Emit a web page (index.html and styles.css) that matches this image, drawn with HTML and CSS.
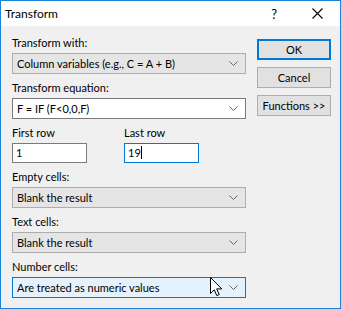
FILE: index.html
```html
<!DOCTYPE html>
<html lang="en">
<head>
  <meta charset="UTF-8">
  <title>Transform</title>
  <link rel="stylesheet" href="styles.css">
</head>
<body>
  <div class="window">
    <div class="titlebar">
      <span class="title">Transform</span>
      <span class="help">?</span>
      <svg class="close" width="11" height="11" viewBox="0 0 11 11">
        <path d="M0.5 0.5 L10.5 10.5 M10.5 0.5 L0.5 10.5" stroke="#000" stroke-width="1.1" fill="none"/>
      </svg>
    </div>

    <div class="content">
      <div class="form">
        <div class="group">
          <div class="label">Transform with:</div>
          <div class="combo">
            <span>Column variables (e.g., C = A + B)</span>
            <svg class="chev" width="9" height="5" viewBox="0 0 9 5"><path d="M0.5 0.5 L4.5 4.5 L8.5 0.5" stroke="#666" fill="none"/></svg>
          </div>
        </div>

        <div class="group">
          <div class="label">Transform equation:</div>
          <div class="combo edit">
            <span>F = IF (F&lt;0,0,F)</span>
            <svg class="chev" width="9" height="5" viewBox="0 0 9 5"><path d="M0.5 0.5 L4.5 4.5 L8.5 0.5" stroke="#666" fill="none"/></svg>
          </div>
        </div>

        <div class="group rows">
          <div class="rowfield">
            <div class="label">First row</div>
            <div class="textbox">1</div>
          </div>
          <div class="rowfield">
            <div class="label">Last row</div>
            <div class="textbox focused">19<span class="caret"></span></div>
          </div>
        </div>

        <div class="group">
          <div class="label">Empty cells:</div>
          <div class="combo">
            <span>Blank the result</span>
            <svg class="chev" width="9" height="5" viewBox="0 0 9 5"><path d="M0.5 0.5 L4.5 4.5 L8.5 0.5" stroke="#666" fill="none"/></svg>
          </div>
        </div>

        <div class="group">
          <div class="label">Text cells:</div>
          <div class="combo">
            <span>Blank the result</span>
            <svg class="chev" width="9" height="5" viewBox="0 0 9 5"><path d="M0.5 0.5 L4.5 4.5 L8.5 0.5" stroke="#666" fill="none"/></svg>
          </div>
        </div>

        <div class="group">
          <div class="label">Number cells:</div>
          <div class="combo hover">
            <span>Are treated as numeric values</span>
            <svg class="chev" width="9" height="5" viewBox="0 0 9 5"><path d="M0.5 0.5 L4.5 4.5 L8.5 0.5" stroke="#666" fill="none"/></svg>
            <svg class="cursor" width="13" height="20" viewBox="0 0 13 20">
              <path d="M0.5 0.5 L0.5 16.5 L4.3 12.8 L6.8 18.6 L9.2 17.6 L6.7 11.9 L11.8 11.9 Z" fill="#fff" stroke="#000" stroke-width="1" stroke-linejoin="miter"/>
            </svg>
          </div>
        </div>
      </div>

      <div class="buttons">
        <button class="default">OK</button>
        <button>Cancel</button>
        <button>Functions &gt;&gt;</button>
      </div>
    </div>
  </div>
</body>
</html>
```

FILE: styles.css
```css
* {
  box-sizing: border-box;
}

body {
  margin: 0;
  font-family: Lato, "Liberation Sans", Arial, sans-serif;
  font-size: 11px;
  color: #000;
  background: #fff;
}

.window {
  width: 341px;
  height: 309px;
  border: 1px solid #1883d7;
  background: #f0f0f0;
}

.titlebar {
  height: 25px;
  background: #fff;
  display: flex;
  align-items: center;
  padding-left: 4px;
}

.title {
  flex: 1;
  font-size: 12px;
}

.help {
  font-size: 13px;
  margin-right: 35px;
}

.close {
  margin-right: 17px;
}

.content {
  display: flex;
  padding-left: 11px;
}

.form {
  width: 234px;
  padding-top: 9px;
}

.group {
  margin-bottom: 6px;
}

.label {
  height: 15px;
  line-height: 15px;
  margin-bottom: 3px;
  color: #000;
}

.combo {
  position: relative;
  height: 21px;
  display: flex;
  align-items: center;
  justify-content: space-between;
  padding: 0 7px 0 4px;
  background: #e5e5e5;
  border: 1px solid #adadad;
}

.combo.edit {
  background: #fff;
  border-color: #7a7a7a;
}

.combo.hover {
  background: #e5f1fb;
  border-color: #0078d7;
}

.chev {
  display: block;
}

.rows {
  display: flex;
  gap: 37px;
}

.rowfield {
  width: 75px;
}

.textbox {
  height: 20px;
  line-height: 18px;
  padding-left: 3px;
  background: #fff;
  border: 1px solid #7a7a7a;
}

.textbox.focused {
  border-color: #0078d7;
}

.caret {
  display: inline-block;
  width: 1px;
  height: 13px;
  background: #000;
  vertical-align: -2px;
}

.cursor {
  position: absolute;
  left: 197px;
  top: -1px;
}

.buttons {
  display: flex;
  flex-direction: column;
  gap: 7px;
  margin-left: 11px;
  padding-top: 13px;
}

.buttons button {
  width: 74px;
  height: 21px;
  padding: 0;
  font-family: inherit;
  font-size: 11px;
  color: #000;
  background: #e1e1e1;
  border: 1px solid #adadad;
}

.buttons button.default {
  border: 2px solid #0078d7;
}
```
